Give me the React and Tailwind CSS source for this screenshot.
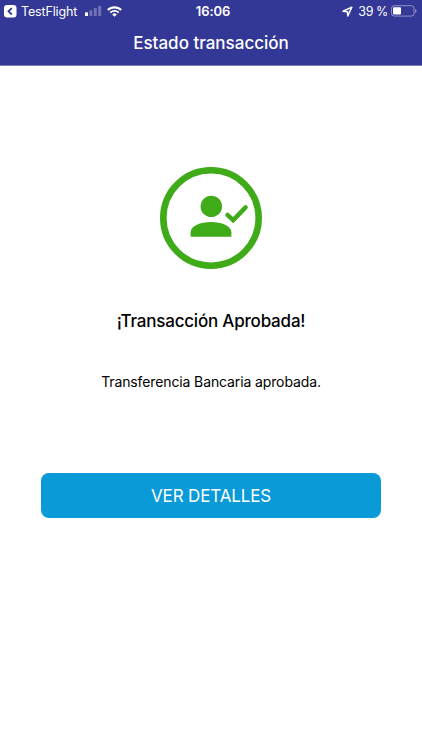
function StatusBar() {
  return (
    <div className="grid h-[22px] grid-cols-3 items-center text-[13px] leading-none">
      <div className="flex items-center pl-1">
        <svg width="13" height="13" viewBox="0 0 13 13">
          <rect width="12.5" height="12.5" rx="3" fill="#fff" />
          <path d="M7.8 3.1L4.5 6.3l3.3 3.2" fill="none" stroke="#333795" strokeWidth="1.8" />
        </svg>
        <span className="ml-1 w-[56px] whitespace-nowrap pt-[2px] text-[12.5px] tracking-[-0.15px]">TestFlight</span>
        <svg className="ml-2" width="17" height="12" viewBox="0 0 17 12" fill="#fff">
          <rect x="0" y="7.3" width="3" height="3.7" rx="0.6" />
          <rect x="4.4" y="5.3" width="3" height="5.7" rx="0.6" opacity="0.3" />
          <rect x="8.8" y="3" width="3" height="8" rx="0.6" opacity="0.3" />
          <rect x="13.2" y="0.8" width="3" height="10.2" rx="0.6" opacity="0.3" />
        </svg>
        <svg className="ml-[5px]" width="15" height="11" viewBox="0 0 15 11" fill="none" stroke="#fff">
          <path d="M0.8 4.1a9.4 9.4 0 0 1 13.4 0" strokeWidth="2.2" />
          <path d="M3.3 6.6a6 6 0 0 1 8.4 0" strokeWidth="1.9" />
          <path d="M7.5 10.7L5.2 8.4a3.3 3.3 0 0 1 4.6 0z" fill="#fff" stroke="none" />
        </svg>
      </div>
      <span className="pl-[4px] text-center font-semibold tracking-[-0.1px]">16:06</span>
      <div className="flex items-center justify-end pr-[5px]">
        <svg width="11" height="11" viewBox="0 0 11 11">
          <path d="M9.8 1.1L1 5.3l4.4.4.4 4.2z" fill="none" stroke="#fff" strokeWidth="1.5" strokeLinejoin="round" />
        </svg>
        <span className="ml-[5px] whitespace-nowrap pt-[2px] text-[12.5px] tracking-[-0.4px]">39 %</span>
        <svg className="ml-[3px]" width="26" height="12" viewBox="0 0 26 12">
          <rect x="0.5" y="0.7" width="22.5" height="10.4" rx="2.6" fill="none" stroke="#fff" strokeOpacity="0.45" />
          <rect x="2" y="2.2" width="8" height="7.4" rx="1" fill="#fff" />
          <path d="M24.3 4v4c1.6-.5 1.6-3.5 0-4z" fill="#fff" opacity="0.6" />
        </svg>
      </div>
    </div>
  );
}

function ApprovedIcon() {
  return (
    <svg width="102" height="102" viewBox="0 0 102 102" fill="#3fab19">
      <circle cx="51" cy="51" r="47.7" fill="none" stroke="#3fab19" strokeWidth="6.6" />
      <circle cx="51.3" cy="39.4" r="10.7" />
      <path d="M30.6 69.8v-4.3C30.6 58.7 40.5 55 51 55s20.4 3.7 20.4 10.5v4.3z" />
      <path d="M67.5 47.9l5.7 5.2 12.4-12.7" fill="none" stroke="#3fab19" strokeWidth="4.4" strokeLinecap="round" />
    </svg>
  );
}

export default function App() {
  return (
    <div className="flex h-[750px] w-full flex-col bg-white font-['Inter','Liberation_Sans',sans-serif] text-black">
      <header className="h-[66px] border-b border-[#7f81bd] bg-[#333795] text-white">
        <StatusBar />
        <h1 className="pt-[9px] text-center text-[17px] font-medium leading-6">Estado transacción</h1>
      </header>
      <main className="flex flex-col items-center pt-[101px]">
        <ApprovedIcon />
        <h2 className="mt-10 text-[17px] font-medium leading-6 tracking-[-0.2px]">¡Transacción Aprobada!</h2>
        <p className="mt-[39px] text-[14px] leading-5 tracking-[-0.12px]">Transferencia Bancaria aprobada.</p>
        <button className="mt-[81px] h-[45px] w-[340px] rounded-lg bg-[#099ad7] pt-[2px] text-[17px] tracking-[-0.15px] text-white">
          VER DETALLES
        </button>
      </main>
    </div>
  );
}
